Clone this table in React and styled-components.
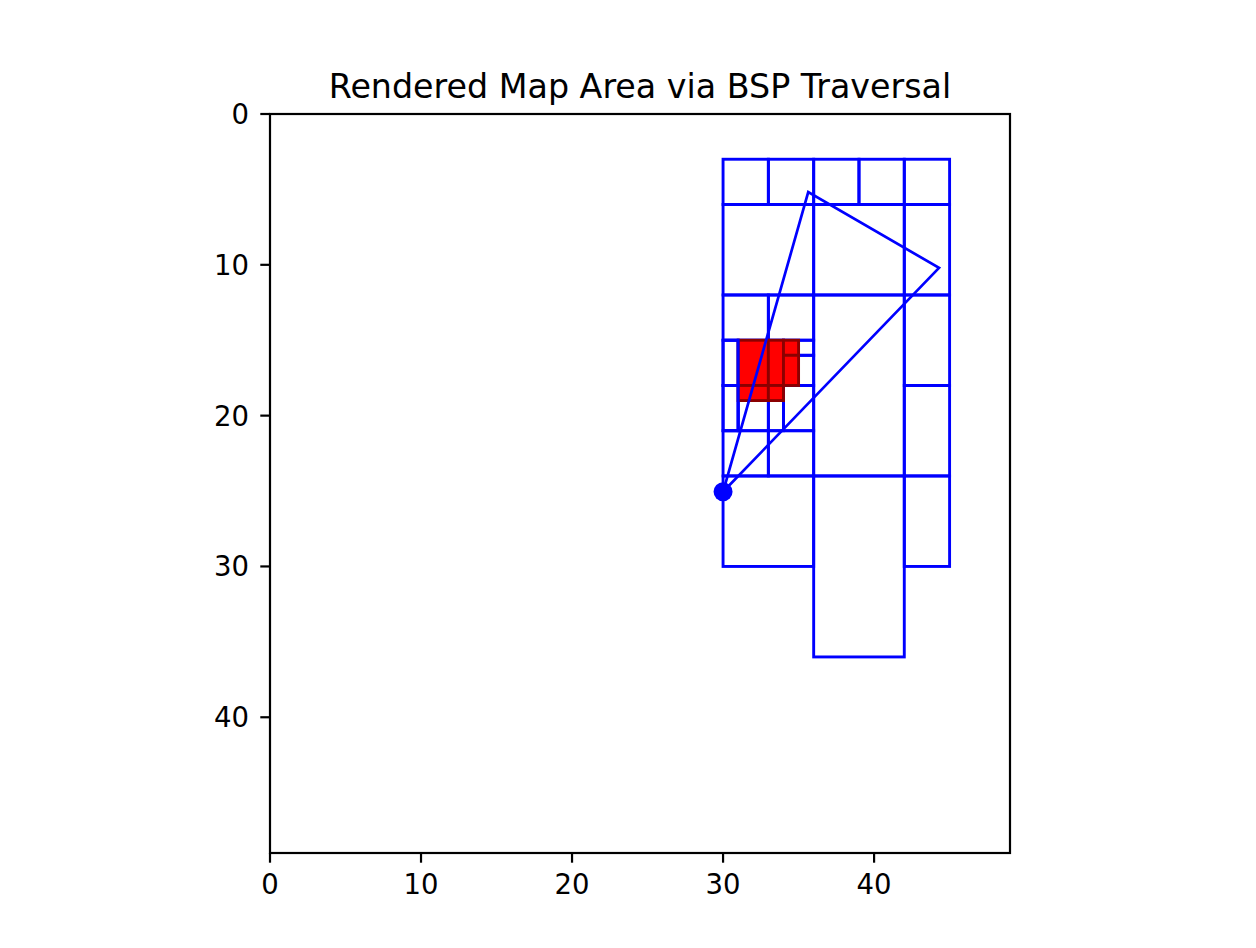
import React from "react";
import styled, { createGlobalStyle } from "styled-components";

const GlobalStyle = createGlobalStyle`
  html, body {
    margin: 0;
    padding: 0;
    background: #ffffff;
  }
`;

const Figure = styled.div`
  width: 1256px;
  height: 948px;
  background: #ffffff;
  overflow: hidden;
`;

const Chart = styled.svg`
  display: block;
  font-family: "DejaVu Sans", "Liberation Sans", sans-serif;
`;

// axes box in page pixels
const AX = { left: 270, right: 1010, top: 114, bottom: 853 };
const LIM = 49;
const sx = (x) => AX.left + (x * (AX.right - AX.left)) / LIM;
const sy = (y) => AX.top + (y * (AX.bottom - AX.top)) / LIM;

// bsp leaves [x, y, w, h]
const leaves = [
  [30, 3, 3, 3], [33, 3, 3, 3], [36, 3, 3, 3], [39, 3, 3, 3], [42, 3, 3, 3],
  [30, 6, 6, 6], [36, 6, 6, 6], [42, 6, 3, 6],
  [30, 12, 3, 3], [33, 12, 3, 3], [36, 12, 6, 12],
  [42, 12, 3, 6], [42, 18, 3, 6],
  [30, 15, 1, 3], [31, 15, 2, 3], [33, 15, 1, 3], [34, 15, 2, 1], [34, 16, 2, 2],
  [30, 18, 1, 3], [31, 18, 2, 3], [33, 18, 1, 3], [34, 18, 2, 3],
  [30, 21, 3, 3], [33, 21, 3, 3],
  [30, 24, 6, 6], [36, 24, 6, 12], [42, 24, 3, 6],
];

const rendered = [
  [31, 15, 2, 3], [33, 15, 1, 3], [34, 15, 1, 1], [34, 16, 1, 2],
  [31, 18, 2, 1], [33, 18, 1, 1],
];

// drawn after the red ones
const overlay = [[30, 15, 1, 3], [30, 18, 1, 3]];

const player = [30, 25.05];
const fov = [
  [30, 25.05],
  [35.64, 5.18],
  [44.3, 10.2],
];

const ticks = [0, 10, 20, 30, 40];

function Cell({ r, fill, stroke }) {
  const [x, y, w, h] = r;
  return (
    <rect
      x={sx(x)}
      y={sy(y)}
      width={sx(x + w) - sx(x)}
      height={sy(y + h) - sy(y)}
      fill={fill}
      stroke={stroke}
      strokeWidth={2.9}
    />
  );
}

export default function App() {
  return (
    <Figure>
      <GlobalStyle />
      <Chart width="1256" height="948" viewBox="0 0 1256 948">
        <text x={640} y={97.5} fontSize={33.3} textAnchor="middle" fill="#000">
          Rendered Map Area via BSP Traversal
        </text>

        <g>
          {leaves.map((r, i) => (
            <Cell key={"b" + i} r={r} fill="none" stroke="#0000ff" />
          ))}
          {rendered.map((r, i) => (
            <Cell key={"r" + i} r={r} fill="#ff0000" stroke="#8b0000" />
          ))}
          {overlay.map((r, i) => (
            <Cell key={"o" + i} r={r} fill="none" stroke="#0000ff" />
          ))}
          <polygon
            points={fov.map(([x, y]) => `${sx(x)},${sy(y)}`).join(" ")}
            fill="none"
            stroke="#0000ff"
            strokeWidth={2.7}
          />
          <circle cx={sx(player[0])} cy={sy(player[1])} r={9.5} fill="#0000ff" />
        </g>

        <rect
          x={AX.left}
          y={AX.top}
          width={AX.right - AX.left}
          height={AX.bottom - AX.top}
          fill="none"
          stroke="#000"
          strokeWidth={2.2}
        />

        {ticks.map((t) => (
          <g key={"x" + t}>
            <line x1={sx(t)} x2={sx(t)} y1={AX.bottom} y2={AX.bottom + 9.7} stroke="#000" strokeWidth={2.2} />
            <text x={sx(t)} y={894} fontSize={27.5} textAnchor="middle" fill="#000">
              {t}
            </text>
          </g>
        ))}
        {ticks.map((t) => (
          <g key={"y" + t}>
            <line x1={AX.left - 9.7} x2={AX.left} y1={sy(t)} y2={sy(t)} stroke="#000" strokeWidth={2.2} />
            <text x={249} y={sy(t) + 10} fontSize={27.5} textAnchor="end" fill="#000">
              {t}
            </text>
          </g>
        ))}
      </Chart>
    </Figure>
  );
}
